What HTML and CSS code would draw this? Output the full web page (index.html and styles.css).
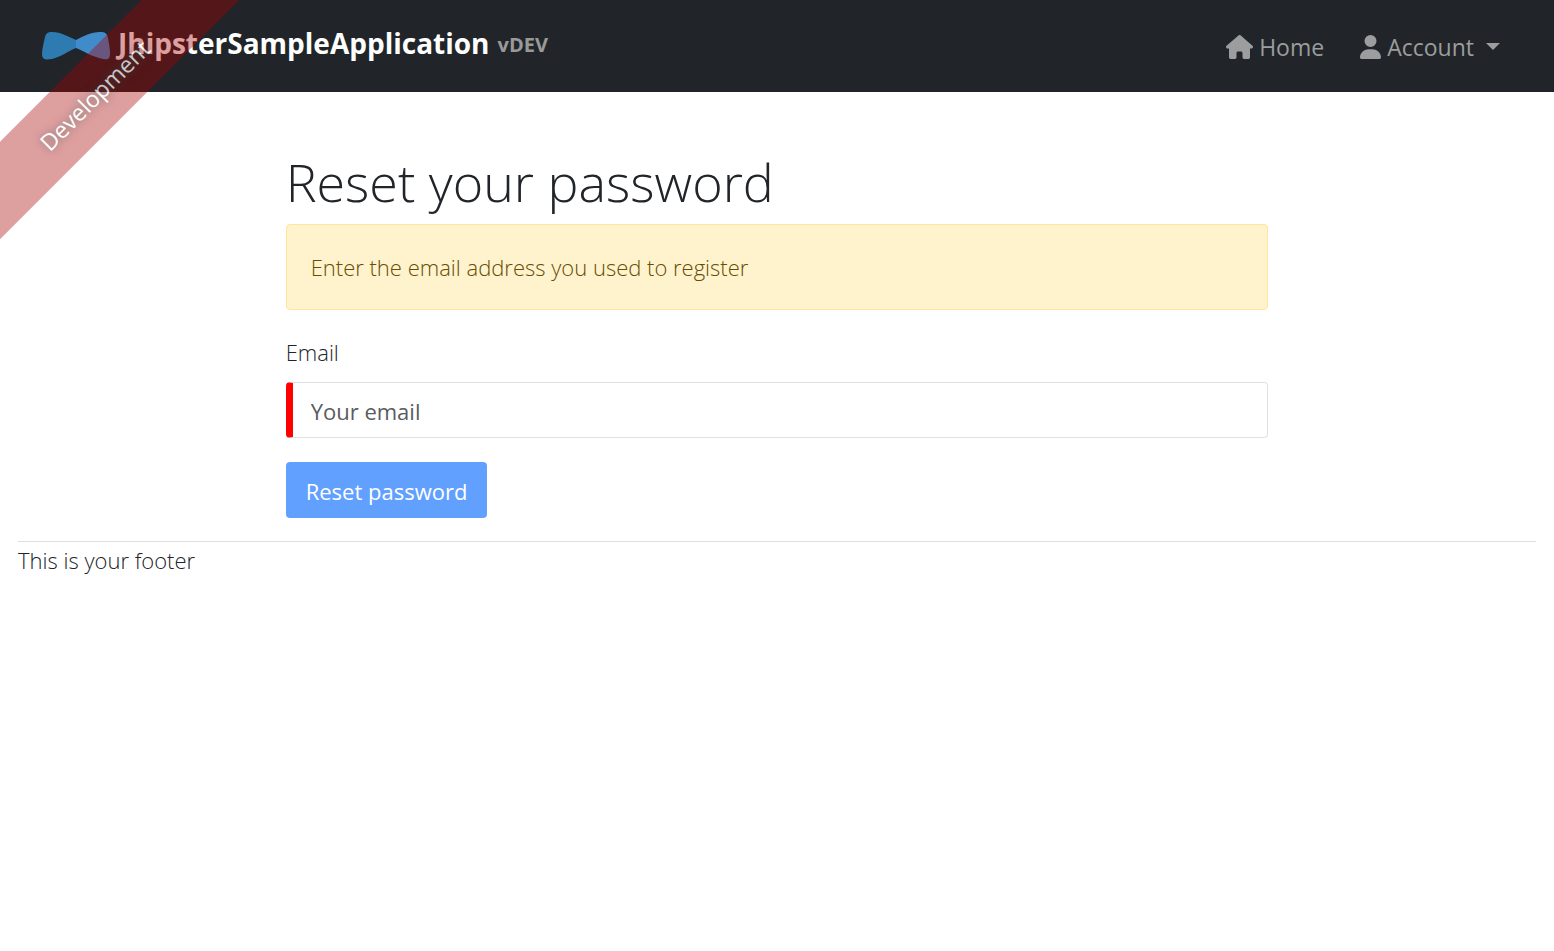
FILE: index.html
```html
<!DOCTYPE html>
<html lang="en">
<head>
<meta charset="utf-8">
<meta name="viewport" content="width=device-width, initial-scale=1">
<title>Reset your password</title>
<link rel="stylesheet" href="styles.css">
</head>
<body>
<div class="ribbon"><a class="ribbon-label" href="#">Development</a></div>
<header class="navbar">
  <a class="brand" href="#">
    <svg class="logo" viewBox="0 0 68 28" aria-hidden="true">
      <path fill="#2e7bb2" d="M3 5C4 1 6 0 10 0C19 0 27 5 34 8V16C26 19 19 25 10 27C4 28 0 28 0 22C0 17 2 10 3 5Z"/>
      <path fill="#428bca" d="M34 8C42 4 49 0 58 0C63 0 65 1 66 6C67 12 68 16 68 21C68 27 66 28 61 27C50 25 42 19 34 16Z"/>
    </svg>
    <span class="brand-name">JhipsterSampleApplication</span>
    <span class="version">vDEV</span>
  </a>
  <nav class="menu">
    <a class="menu-link" href="#">
      <svg class="icon-home" viewBox="0 0 576 512" aria-hidden="true"><path fill="currentColor" d="M575.8 255.500c0 18-15 32.100-32 32.100h-32l.7 160.200c0 2.700-.2 5.400-.5 8.100V472c0 22.100-17.900 40-40 40H456c-1.100 0-2.200 0-3.300-.1c-1.400 .1-2.800 .1-4.200 .1H392c-22.100 0-40-17.900-40-40V384c0-17.700-14.300-32-32-32H256c-17.700 0-32 14.300-32 32v88c0 22.100-17.900 40-40 40H128.100c-1.500 0-3-.1-4.500-.2c-1.200 .1-2.400 .2-3.600 .2H104c-22.100 0-40-17.900-40-40V287.600H32c-18 0-32-14-32-32.100c0-9 3-17 10-24L266.400 8c7-7 15-8 22-8s15 2 21 7L564.800 231.500c8 7 12 15 11 24z"/></svg>
      <span>Home</span>
    </a>
    <button class="menu-link" type="button">
      <svg class="icon-user" viewBox="0 0 448 512" aria-hidden="true"><path fill="currentColor" d="M224 256A128 128 0 1 0 224 0a128 128 0 1 0 0 256zm-45.700 48C79.800 304 0 383.800 0 482.300C0 498.700 13.300 512 29.700 512H418.300c16.400 0 29.700-13.300 29.700-29.700C448 383.800 368.200 304 269.700 304H178.300z"/></svg>
      <span>Account</span>
      <span class="caret"></span>
    </button>
  </nav>
</header>
<div class="page">
  <main class="layout">
    <section class="content">
      <h1 class="title">Reset your password</h1>
      <div class="alert">Enter the email address you used to register</div>
      <form class="form">
        <label class="label" for="email">Email</label>
        <input class="input" id="email" type="email" placeholder="Your email">
        <button class="submit" type="submit" disabled>Reset password</button>
      </form>
    </section>
  </main>
  <footer class="footer">This is your footer</footer>
</div>
</body>
</html>
```
FILE: styles.css
```css
* { box-sizing: border-box; }
body {
  margin: 0;
  background: #fff;
  color: #212529;
  font-family: "Segoe UI", "Open Sans", "Noto Sans", sans-serif;
  font-size: 22px;
  font-weight: 300;
  line-height: 36px;
}
a { color: inherit; text-decoration: none; }
button, input { font: inherit; }

.navbar {
  display: flex;
  align-items: center;
  justify-content: space-between;
  min-height: 92px;
  padding: 0 54px 0 42px;
  background: #212529;
}
.brand { display: flex; align-items: center; gap: 8px; padding-bottom: 6px; color: #fff; font-weight: 700; }
.logo { width: 68px; height: 28px; margin-top: 6px; }
.brand-name { font-size: 28px; }
.version { padding-top: 4px; color: #999; font-size: 20px; }
.menu { display: flex; gap: 36px; padding-top: 2px; }
.menu-link {
  display: flex;
  align-items: center;
  gap: 6px;
  padding: 0;
  border: 0;
  background: none;
  color: #9b9d9e;
  font-size: 23px;
  font-weight: 400;
}
.icon-home { width: 27px; height: 24px; }
.icon-user { width: 21px; height: 24px; }
.caret { margin: 0 0 2px 6px; border: 7px solid transparent; border-top-color: currentColor; border-bottom: 0; }

.ribbon { position: absolute; top: 0; left: 0; width: 260px; height: 260px; overflow: hidden; pointer-events: none; opacity: 0.75; z-index: 10; }
.ribbon-label {
  position: absolute;
  top: 61px;
  left: -105px;
  width: 400px;
  background: rgba(170, 0, 0, 0.5);
  color: #fff;
  font-size: 23px;
  font-weight: 400;
  line-height: 69px;
  text-align: center;
  text-shadow: 0 0 8px #444;
  transform: rotate(-45deg);
  pointer-events: auto;
}

.page { padding: 54px 18px 0; }
.layout { display: grid; grid-template-columns: 1fr 4fr 1fr; padding: 0 22px; }
.content { grid-column: 2; }
.title { margin: 0 0 6px; font-size: 52px; font-weight: 300; line-height: 72px; }
.alert { padding: 24px; border: 1px solid #ffe69c; border-radius: 4px; background: #fff3cd; color: #664d03; }
.form { display: flex; flex-direction: column; align-items: flex-start; margin: 24px 0 23px; }
.label { margin-bottom: 12px; }
.input {
  width: 100%;
  height: 56px;
  margin-bottom: 24px;
  padding: 2px 18px 0;
  border: 1px solid #dee2e6;
  border-left: 7px solid #f00;
  border-radius: 4px;
  background: #fff;
  color: #212529;
  font-weight: 400;
}
.input::placeholder { color: #595c5f; opacity: 1; }
.submit { height: 56px; padding: 2px 20px 0; border: 0; border-radius: 4px; background: #61a0fe; color: #fff; font-weight: 400; }
.footer { border-top: 1px solid #dedede; }
```
